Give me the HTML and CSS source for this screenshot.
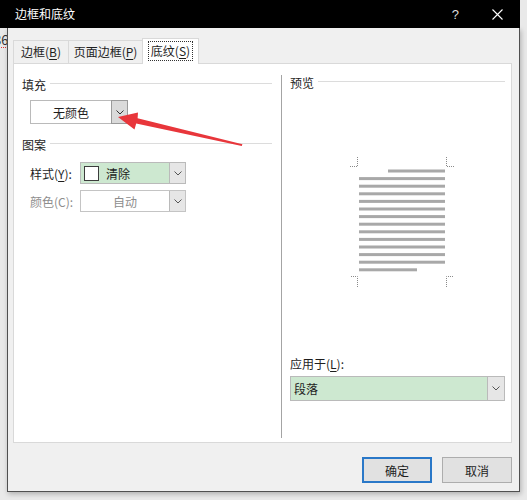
FILE: index.html
```html
<!doctype html>
<html>
	<head>
		<meta charset="utf-8">
		<title>边框和底纹</title>
		<link rel="stylesheet" href="styles.css">
	</head>
	<body>
		<div class="window">
			<div class="titlebar">
				<span class="title">边框和底纹</span>
				<span class="help">?</span>
				<svg class="close" width="11" height="11" viewBox="0 0 11 11"><path d="M0.5 0.5L10.5 10.5M10.5 0.5L0.5 10.5" stroke="#fff" stroke-width="1.1"/></svg>
			</div>
			<div class="row">
				<div class="strip"><span>86</span></div>
				<div class="frame">
					<div class="tabs">
						<div class="tab t1">边框(<u>B</u>)</div>
						<div class="tab t2">页面边框(<u>P</u>)</div>
						<div class="tab active"><span class="focus">底纹(<u>S</u>)</span></div>
					</div>
					<div class="panel">
						<div class="left">
							<div class="group"><span>填充</span><i></i></div>
							<div class="combo fill">
								<span class="val">无颜色</span>
								<span class="btn dark"><svg width="8" height="5" viewBox="0 0 8 5"><polyline points="0.5,0.5 4,4 7.5,0.5" fill="none" stroke="#333"/></svg></span>
							</div>
							<div class="group g2"><span>图案</span><i></i></div>
							<div class="field f1">
								<label>样式(<u>Y</u>):</label>
								<div class="combo green">
									<span class="swatch"></span>
									<span class="val left-val">清除</span>
									<span class="btn"><svg width="8" height="5" viewBox="0 0 8 5"><polyline points="0.5,0.5 4,4 7.5,0.5" fill="none" stroke="#555"/></svg></span>
								</div>
							</div>
							<div class="field f2 disabled">
								<label>颜色(C):</label>
								<div class="combo">
									<span class="val">自动</span>
									<span class="btn"><svg width="8" height="5" viewBox="0 0 8 5"><polyline points="0.5,0.5 4,4 7.5,0.5" fill="none" stroke="#555"/></svg></span>
								</div>
							</div>
						</div>
						<div class="right">
							<div class="group"><span>预览</span><i></i></div>
							<svg class="preview" width="110" height="135" viewBox="345 155 110 135">
								<g stroke="#8a8a8a" stroke-width="1" stroke-dasharray="1 1" fill="none">
									<path d="M357.5 157V166.5H350M446.5 157V166.5H454M357.5 287V276.5H350M446.5 287V276.5H454"/>
								</g>
								<g fill="#a8a8a8">
									<rect x="388" y="169.5" width="57" height="3"/>
									<rect x="359" y="177.1" width="86" height="3"/>
									<rect x="359" y="184.7" width="86" height="3"/>
									<rect x="359" y="192.3" width="86" height="3"/>
									<rect x="359" y="199.9" width="86" height="3"/>
									<rect x="359" y="207.5" width="86" height="3"/>
									<rect x="359" y="215.1" width="86" height="3"/>
									<rect x="359" y="222.7" width="86" height="3"/>
									<rect x="359" y="230.3" width="86" height="3"/>
									<rect x="359" y="237.9" width="86" height="3"/>
									<rect x="359" y="245.5" width="86" height="3"/>
									<rect x="359" y="253.1" width="86" height="3"/>
									<rect x="359" y="260.7" width="86" height="3"/>
									<rect x="359" y="268.3" width="58" height="3"/>
								</g>
							</svg>
							<div class="apply">
								<label>应用于(<u>L</u>):</label>
								<div class="combo green wide">
									<span class="val left-val">段落</span>
									<span class="btn"><svg width="8" height="5" viewBox="0 0 8 5"><polyline points="0.5,0.5 4,4 7.5,0.5" fill="none" stroke="#555"/></svg></span>
								</div>
							</div>
						</div>
					</div>
					<div class="buttons">
						<div class="button default">确定</div>
						<div class="button">取消</div>
					</div>
				</div>
			</div>
			<!-- annotation arrow drawn over the dialog -->
			<svg class="arrow" width="527" height="500" viewBox="0 0 527 500">
				<polygon points="118,117 138,112.5 137.6,118.2 242.4,144.3 241.8,146 136.2,123.6 134.5,129.5" fill="#e8363b"/>
			</svg>
		</div>
	</body>
</html>
```
FILE: styles.css
```css
*{
	margin:0;
	padding:0;
	box-sizing:border-box;
}
body{
	background-color:#e9e9e9;
	font-family:"Noto Sans CJK SC","Microsoft YaHei",sans-serif;
	font-size:12px;
	color:#1e1e1e;
	width:527px;
	height:500px;
	overflow:hidden;
}
u{
	text-decoration-thickness:1px;
	text-underline-offset:2px;
}
.window{
	position:relative;
	width:520px;
}
.titlebar{
	height:28px;
	background-color:#000;
	color:#fff;
	display:flex;
	align-items:center;
	padding-left:15px;
}
.title{
	flex:1;
	line-height:16px;
}
.help{
	font-family:"Liberation Sans",sans-serif;
	font-size:13px;
	margin-right:33px;
	color:#ddd;
}
.close{
	margin-right:17px;
}
.row{
	display:flex;
}
.strip{
	width:7px;
	height:464px;
	overflow:hidden;
	padding-top:5px;
	font-size:13px;
	color:#333;
}
.strip span{
	display:block;
	margin-left:-6px;
	border-bottom:1px dotted #d33;
	width:14px;
	line-height:14px;
}
.frame{
	width:513px;
	height:464px;
	background-color:#f0f0f0;
	border:1px solid #505050;
	border-top:none;
	padding:10px 7px 0 5px;
	box-shadow:1px 2px 5px rgba(0,0,0,0.25);
}
.tabs{
	display:flex;
	height:25px;
	align-items:flex-end;
}
.tab{
	height:23px;
	border:1px solid #d9d9d9;
	border-bottom:none;
	background-color:#f0f0f0;
	display:flex;
	align-items:center;
	justify-content:center;
	line-height:16px;
}
.t1{
	width:56px;
}
.t2{
	width:75px;
	margin-left:-1px;
}
.tab.active{
	width:57px;
	height:25px;
	margin-left:-1px;
	background-color:#fff;
	position:relative;
	z-index:1;
	margin-bottom:-1px;
	height:26px;
	padding-bottom:1px;
}
.focus{
	outline:1px dotted #333;
	outline-offset:1px;
	padding:0 1px;
}
.panel{
	height:380px;
	background-color:#fff;
	border:1px solid #d9d9d9;
	display:flex;
}
.group{
	display:flex;
	align-items:center;
	height:16px;
	line-height:16px;
}
.group i{
	flex:1;
	border-top:1px solid #dcdcdc;
	margin-left:4px;
	margin-top:-3px;
}
.left{
	width:267px;
	padding:13px 9px 0 8px;
}
.combo{
	display:flex;
	align-items:stretch;
	border:1px solid #bababa;
	background-color:#fff;
}
.val{
	flex:1;
	display:flex;
	align-items:center;
	justify-content:center;
}
.left-val{
	justify-content:flex-start;
	padding-left:3px;
}
.btn{
	width:16px;
	border-left:1px solid #bababa;
	background-color:#e6e6e6;
	display:flex;
	align-items:center;
	justify-content:center;
}
.btn.dark{
	background-color:#dadada;
	border:1px solid #9a9a9a;
	margin:-1px -1px -1px 0;
	width:17px;
}
.fill{
	width:98px;
	height:24px;
	margin:7px 0 0 8px;
}
.g2{
	margin-top:13px;
}
.field{
	display:flex;
	align-items:center;
	margin-left:8px;
}
.field label{
	width:50px;
}
.f1{
	margin-top:9px;
}
.f2{
	margin-top:6px;
}
.field .combo{
	width:106px;
	height:22px;
}
.green{
	background-color:#cde8d0;
}
.swatch{
	width:15px;
	height:15px;
	border:1px solid #3c3c3c;
	background-color:#fff;
	align-self:center;
	margin-left:3px;
	margin-right:4px;
}
.disabled{
	color:#8d8d8d;
}
.disabled .combo{
	border-color:#c4c4c4;
}
.right{
	flex:1;
	border-left:1px solid #a4a4a4;
	margin:11px 0 4px;
	padding:0 6px 0 8px;
	display:flex;
	flex-direction:column;
}
.preview{
	display:block;
	margin:64px 0 0 55px;
}
.apply{
	margin-top:auto;
	padding-bottom:37px;
}
.apply label{
	display:block;
	line-height:16px;
	margin-bottom:4px;
}
.wide{
	width:215px;
	height:25px;
}
.wide .btn{
	width:17px;
}
.buttons{
	display:flex;
	justify-content:flex-end;
	gap:10px;
	margin-top:14px;
}
.button{
	width:70px;
	height:26px;
	border:1px solid #adadad;
	background-color:#e1e1e1;
	display:flex;
	align-items:center;
	justify-content:center;
}
.button.default{
	border:2px solid #2a78c8;
}
.arrow{
	position:absolute;
	left:0;
	top:0;
	pointer-events:none;
}
```
